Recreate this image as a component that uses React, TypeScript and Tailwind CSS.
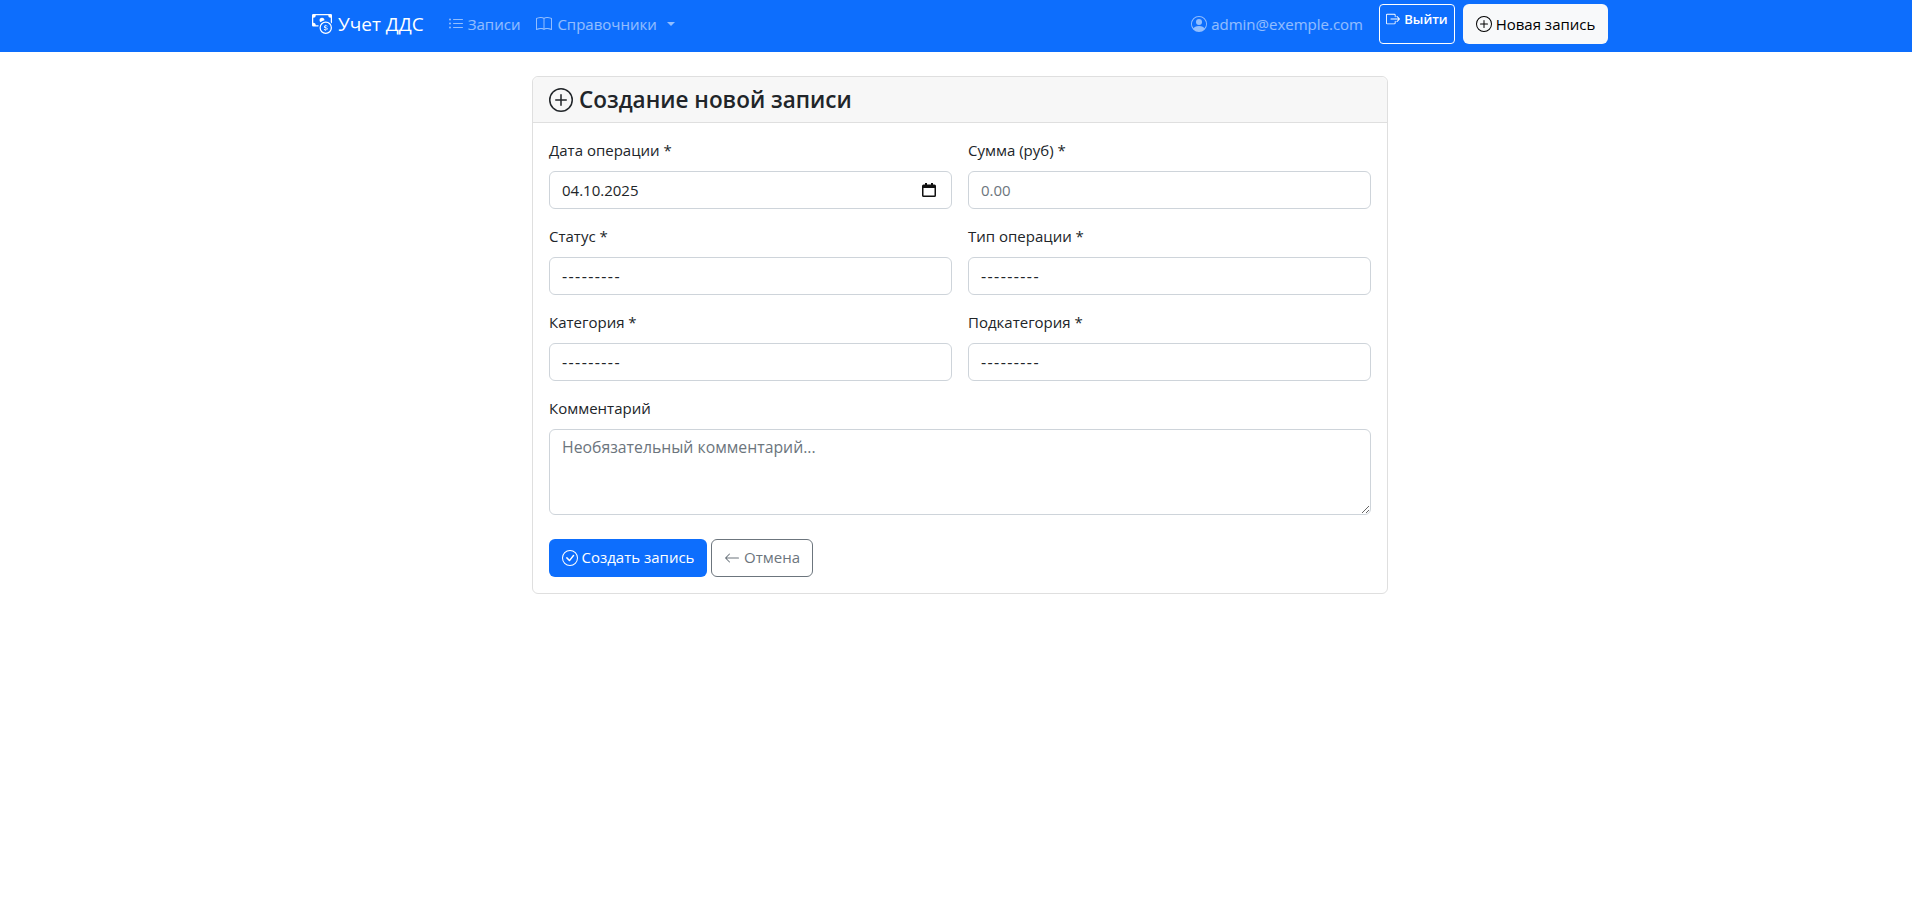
import { BsArrowLeft, BsBook, BsBoxArrowRight, BsCashCoin, BsCheckCircle, BsListUl, BsPersonCircle, BsPlusCircle } from "react-icons/bs";

const FONT = "font-['Open_Sans','Noto_Sans',sans-serif]";
const FIELD =
  "block w-full h-[38px] px-3 rounded-[6px] border border-[#ced4da] bg-white text-base text-[#212529] placeholder:text-[#6c757d] outline-none";

function Field({ label, children }: { label: string; children: React.ReactNode }) {
  return (
    <div className="flex flex-col">
      <label className="mb-2 h-6 text-[15px] leading-[22px] text-[#212529]">{label}</label>
      {children}
    </div>
  );
}

function EmptySelect() {
  return (
    <select className={`${FIELD} appearance-none tracking-[1.4px]`} defaultValue="">
      <option value="">---------</option>
    </select>
  );
}

function CalendarIcon() {
  return (
    <svg width="14" height="14" viewBox="0 0 14 14" className="mr-[3px] shrink-0">
      <path d="M3 0h2v1.5h4V0h2v1.5h1.5A1.5 1.5 0 0 1 14 3v9.5a1.5 1.5 0 0 1-1.5 1.5h-11A1.5 1.5 0 0 1 0 12.500V3a1.500 1.500 0 0 1 1.500-1.500H3V0zM1.500 5v7.500h11V5h-11z" fill="#111" />
    </svg>
  );
}

function Navbar() {
  return (
    <nav className="h-[52px] bg-[#0d6efd]">
      <div className="ml-[300px] flex h-12 w-[1320px] items-center px-3">
        <a className="flex items-center gap-1.5 text-[19px] text-white">
          <BsCashCoin size={20} />
          Учет ДДС
        </a>
        <div className="ml-6 flex items-center gap-4 text-[15px] text-white/55">
          <a className="flex items-center gap-1">
            <BsListUl size={16} />
            Записи
          </a>
          <a className="flex items-center gap-1">
            <BsBook size={16} />
            <span className="ml-px">Справочники</span>
            <span className="ml-1.5 border-x-[4px] border-t-[4px] border-x-transparent border-t-white/55" />
          </a>
        </div>
        <div className="ml-auto flex items-center">
          <span className="mr-4 flex items-center gap-1 text-[15px] text-white/55">
            <BsPersonCircle size={16} />
            admin@exemple.com
          </span>
          <button className="flex h-10 w-[76px] items-start justify-center gap-1 rounded-[4px] border border-white pt-[5px] text-[13px] font-semibold text-white">
            <BsBoxArrowRight size={14} className="mt-[2px]" />
            Выйти
          </button>
          <button className="ml-2 flex h-10 w-[145px] items-center justify-center gap-1 rounded-[6px] bg-[#f8f9fa] text-[15px] text-black">
            <BsPlusCircle size={16} />
            Новая запись
          </button>
        </div>
      </div>
    </nav>
  );
}

export default function App() {
  return (
    <div className={`min-h-screen bg-white ${FONT}`}>
      <Navbar />
      <main className="ml-[532px] mt-6 w-[856px] rounded-[6px] border border-[#dfdfdf]">
        <div className="flex h-[46px] items-center gap-1.5 rounded-t-[6px] border-b border-[#dfdfdf] bg-[#f7f7f7] px-4">
          <BsPlusCircle size={24} className="text-[#212529]" />
          <h1 className="text-[22.5px] font-semibold text-[#212529]">Создание новой записи</h1>
        </div>
        <form className="flex flex-col p-4">
          <div className="grid grid-cols-2 gap-x-4 gap-y-4">
            <Field label="Дата операции *">
              <div className={`${FIELD} flex items-center justify-between`}>
                <span className="text-[15px]">04.10.2025</span>
                <CalendarIcon />
              </div>
            </Field>
            <Field label="Сумма (руб) *">
              <input className={`${FIELD} text-[15px]`} placeholder="0.00" />
            </Field>
            <Field label="Статус *">
              <EmptySelect />
            </Field>
            <Field label="Тип операции *">
              <EmptySelect />
            </Field>
            <Field label="Категория *">
              <EmptySelect />
            </Field>
            <Field label="Подкатегория *">
              <EmptySelect />
            </Field>
          </div>
          <div className="mt-4">
            <Field label="Комментарий">
              <textarea
                className="block h-[86px] w-full rounded-[6px] border border-[#ced4da] px-3 py-1.5 text-[15.8px] text-[#212529] outline-none placeholder:text-[#6c757d]"
                placeholder="Необязательный комментарий..."
              />
            </Field>
          </div>
          <div className="mt-6 flex gap-1">
            <button type="button" className="flex h-[38px] w-[158px] items-center justify-center gap-1 rounded-[6px] bg-[#0d6efd] pb-px text-[15px] text-white">
              <BsCheckCircle size={16} />
              Создать запись
            </button>
            <button type="button" className="flex h-[38px] w-[102px] items-center justify-center gap-1 rounded-[6px] border border-[#6c757d] pb-px text-[15px] text-[#6c757d]">
              <BsArrowLeft size={16} />
              Отмена
            </button>
          </div>
        </form>
      </main>
    </div>
  );
}
